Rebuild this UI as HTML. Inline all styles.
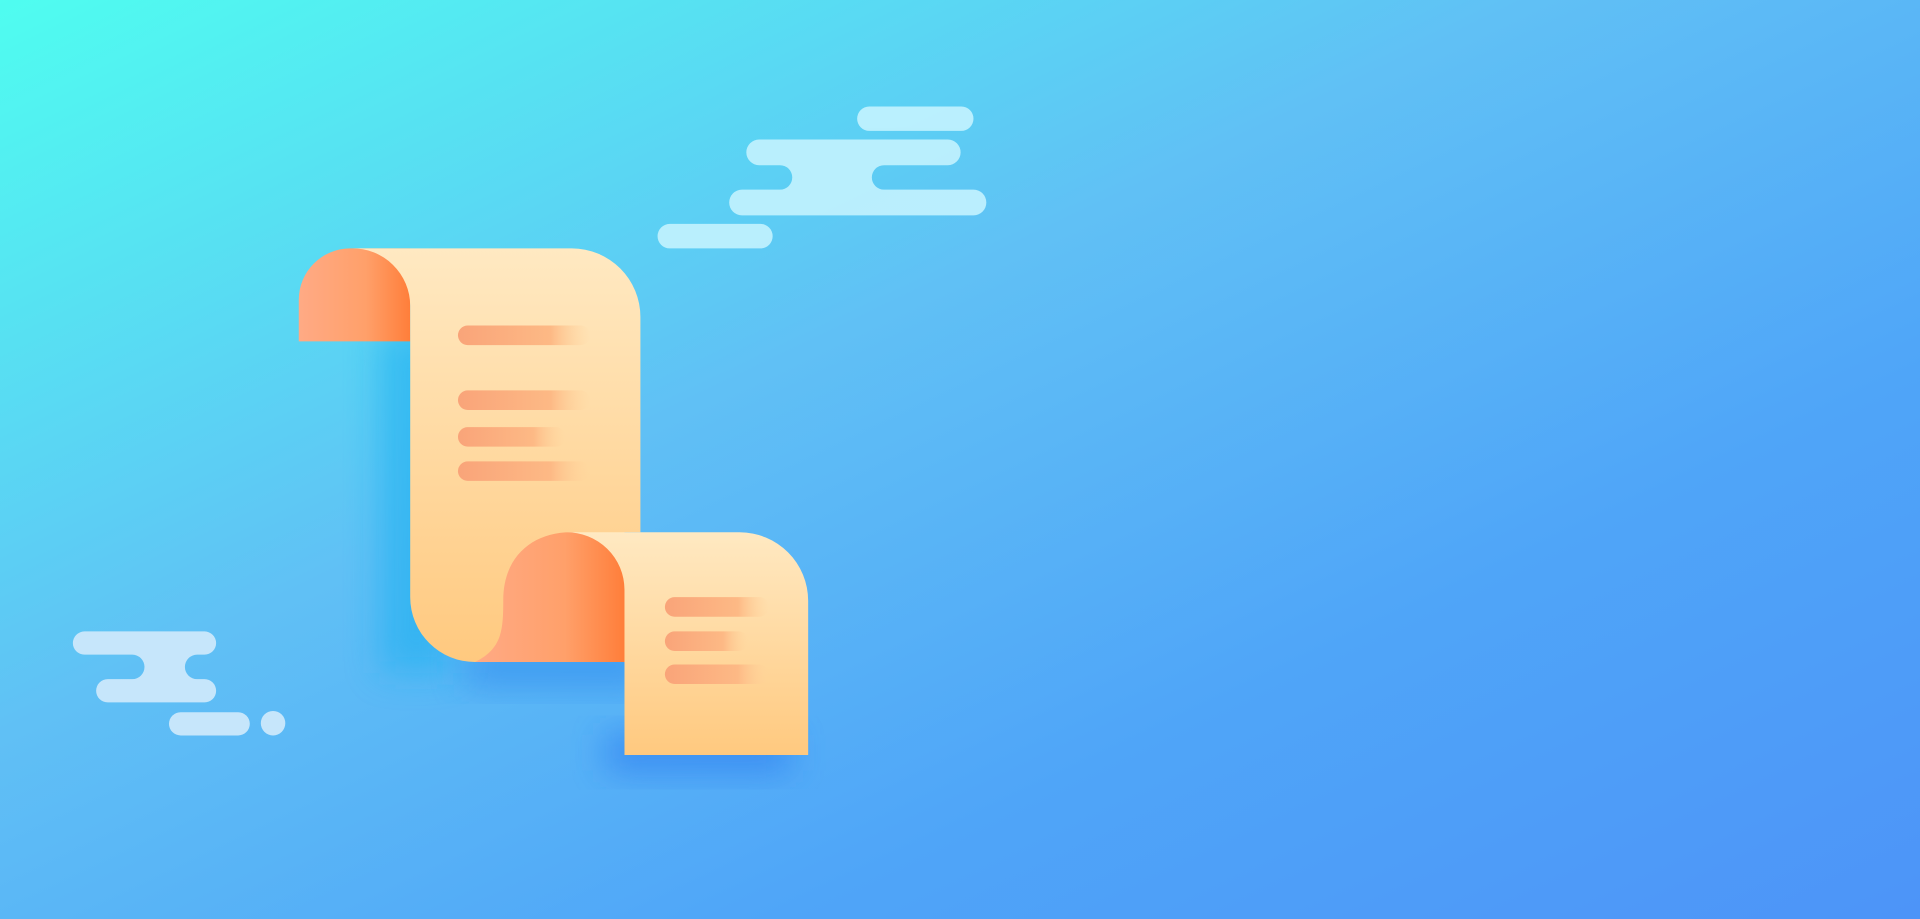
<!DOCTYPE html>
<html><head><style>html,body{margin:0;padding:0;width:1920px;height:919px;overflow:hidden;background:#fff}</style></head>
<body>
<svg width="1920" height="919" viewBox="0 0 1568 751" preserveAspectRatio="none" xmlns="http://www.w3.org/2000/svg">
<defs>
<linearGradient id="bg" x1="0" y1="0" x2="1" y2="1">
<stop offset="0" stop-color="#4ffdf0"/>
<stop offset="0.4" stop-color="#60c0f5"/>
<stop offset="0.7" stop-color="#4fa5f8"/>
<stop offset="1" stop-color="#4d94f8"/>
</linearGradient>
<linearGradient id="paper" x1="0" y1="0" x2="0" y2="1">
<stop offset="0" stop-color="#ffe9c2"/><stop offset="1" stop-color="#ffc97f"/>
</linearGradient>
<linearGradient id="curl" x1="0" y1="0" x2="1" y2="0">
<stop offset="0" stop-color="#ffaa85"/><stop offset="0.6" stop-color="#ffa06a"/><stop offset="1" stop-color="#ff7e3a"/>
</linearGradient>
<linearGradient id="line" x1="0" y1="0" x2="1" y2="0">
<stop offset="0" stop-color="#f9a479"/><stop offset="0.7" stop-color="#fdb985"/><stop offset="1" stop-color="#ffd39b" stop-opacity="0"/>
</linearGradient>
<filter id="sh" x="-50%" y="-50%" width="200%" height="200%"><feGaussianBlur stdDeviation="14"/></filter>
</defs>
<rect width="1568" height="751" fill="url(#bg)"/>
<rect x="310" y="270" width="60" height="280" fill="#1fb0f0" opacity="0.6" filter="url(#sh)"/>
<rect x="380" y="530" width="150" height="30" fill="#2a86ee" opacity="0.6" filter="url(#sh)"/>
<rect x="495" y="600" width="150" height="30" fill="#2f7ef0" opacity="0.7" filter="url(#sh)"/>
<g fill="#c4f3ff" opacity="0.9">
<rect x="700" y="87" width="95" height="20" rx="10"/>
<path d="M620 114 H774 a10 10 0 0 1 0 21 H722 a10 10 0 0 0 0 20 H795 a10 10 0 0 1 0 21 H606 a10 10 0 0 1 0 -21 H637 a10 10 0 0 0 0 -20 H620 a10 10 0 0 1 0 -21Z"/>
<rect x="537" y="183" width="94" height="20" rx="10"/>
</g>
<g fill="#c6e6fb">
<path d="M69 516 H167 a9 9 0 0 1 0 19 H161 a10 10 0 0 0 0 20 H167 a9.5 9.5 0 0 1 0 19 H88 a9.5 9.5 0 0 1 0 -19 H108 a10 10 0 0 0 0 -20 H69 a9.5 9.5 0 0 1 0 -19Z"/>
<rect x="138" y="582" width="66" height="19" rx="9.5"/>
<circle cx="223" cy="591" r="10"/>
</g>
<path d="M244 279 V245 a42 42 0 0 1 42 -42 H335 V279Z" fill="url(#curl)"/>
<path d="M287 203 H467 a56 56 0 0 1 56 56 V435 H510 V541 H388 a53 53 0 0 1 -53 -53 V250 a47 47 0 0 0 -48 -47Z" fill="url(#paper)"/>
<path d="M388 541 C410 530 411 515 411 490 C411 455 435 435 466 435 a44 44 0 0 1 44 44 V541Z" fill="url(#curl)"/>
<g fill="url(#line)">
<rect x="374" y="266" width="108" height="16" rx="8"/>
<rect x="374" y="319" width="108" height="16" rx="8"/>
<rect x="374" y="349" width="88" height="16" rx="8"/>
<rect x="374" y="377" width="108" height="16" rx="8"/>
</g>
<path d="M462 435 H604 a56 56 0 0 1 56 56 V617 H510 V482 a47 47 0 0 0 -48 -47Z" fill="url(#paper)"/>
<g fill="url(#line)">
<rect x="543" y="488" width="85" height="16" rx="8"/>
<rect x="543" y="516" width="68" height="16" rx="8"/>
<rect x="543" y="543" width="85" height="16" rx="8"/>
</g>
</svg>
</body></html>
